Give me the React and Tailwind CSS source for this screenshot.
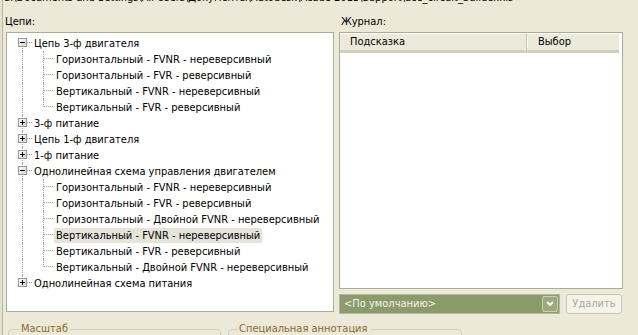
import React from 'react';

const tree = [
  {
    label: 'Цепь 3-ф двигателя',
    open: true,
    children: [
      'Горизонтальный - FVNR - нереверсивный',
      'Горизонтальный - FVR - реверсивный',
      'Вертикальный - FVNR - нереверсивный',
      'Вертикальный - FVR - реверсивный',
    ],
  },
  { label: '3-ф питание' },
  { label: 'Цепь 1-ф двигателя' },
  { label: '1-ф питание' },
  {
    label: 'Однолинейная схема управления двигателем',
    open: true,
    children: [
      'Горизонтальный - FVNR - нереверсивный',
      'Горизонтальный - FVR - реверсивный',
      'Горизонтальный - Двойной FVNR - нереверсивный',
      'Вертикальный - FVNR - нереверсивный',
      'Вертикальный - FVR - реверсивный',
      'Вертикальный - Двойной FVNR - нереверсивный',
    ],
  },
  { label: 'Однолинейная схема питания' },
];

function flatten() {
  const rows = [];
  tree.forEach((node, i) => {
    const firstRoot = i === 0;
    const lastRoot = i === tree.length - 1;
    rows.push({ level: 0, label: node.label, open: !!node.open, firstRoot, lastRoot });
    (node.children || []).forEach((c, j) => {
      rows.push({ level: 1, label: c, lastChild: j === node.children.length - 1, parentLast: lastRoot });
    });
  });
  return rows;
}

function Expander({ open }) {
  return (
    <span className="absolute left-[11px] top-[3px] w-[9px] h-[9px] border border-[#919b9c] bg-gradient-to-br from-white to-[#d8d5c6] flex items-center justify-center">
      <span className="relative w-[5px] h-[5px]">
        <span className="absolute left-0 top-[2px] w-[5px] h-[1px] bg-black" />
        {!open && <span className="absolute left-[2px] top-0 w-[1px] h-[5px] bg-black" />}
      </span>
    </span>
  );
}

function TreeRow({ row, selected }) {
  const dot = 'absolute border-dotted border-[#a0a0a0]';
  return (
    <div className={`relative h-[16px] flex items-center ${row.level === 0 ? 'pl-[25px]' : 'pl-[47px]'}`}>
      {row.level === 0 ? (
        <>
          {!row.firstRoot && <span className={`${dot} left-[15px] top-0 h-[8px] border-l`} />}
          {!row.lastRoot && <span className={`${dot} left-[15px] top-[8px] h-[8px] border-l`} />}
          <span className={`${dot} left-[16px] top-[7px] w-[9px] border-t`} />
          <Expander open={row.open} />
        </>
      ) : (
        <>
          {!row.parentLast && <span className={`${dot} left-[15px] top-0 h-[16px] border-l`} />}
          <span className={`${dot} left-[36px] top-0 ${row.lastChild ? 'h-[8px]' : 'h-[16px]'} border-l`} />
          <span className={`${dot} left-[37px] top-[7px] w-[9px] border-t`} />
        </>
      )}
      <span className={`px-[2px] leading-[15px] whitespace-nowrap ${selected ? 'bg-[#e6e4da]' : ''}`}>{row.label}</span>
    </div>
  );
}

export default function App() {
  const rows = flatten();
  return (
    <div className="w-[638px] h-[335px] overflow-hidden bg-[#ece9d8] relative font-['DejaVu_Sans_Condensed','DejaVu_Sans',sans-serif] text-[11px] text-black flex">
      {/* window frame edge */}
      <div className="w-[3px] shrink-0 flex">
        <div className="w-[2px] bg-[#e3e1d0]" />
        <div className="w-[1px] bg-[#b3bb98]" />
      </div>

      <div className="flex-1 flex flex-col">
        <div className="h-[6px] shrink-0 overflow-hidden">
          <div className="-mt-[9px] leading-[14px] whitespace-nowrap">
            C:\Documents and Settings\All Users\Документы\Autodesk\Acade 2013\Support\ace_circuit_builder.xls
          </div>
        </div>

        <div className="h-[26px] shrink-0 flex items-end pb-[3px] leading-[14px]">
          <span className="ml-[2px] w-[336px]">Цепи:</span>
          <span>Журнал:</span>
        </div>

        <div className="flex shrink-0">
          {/* tree */}
          <div className="ml-[3px] w-[328px] h-[280px] border border-[#a9ad95] bg-white pt-[2px] overflow-hidden">
            {rows.map((r, i) => (
              <TreeRow key={i} row={r} selected={i === 12} />
            ))}
          </div>

          {/* journal */}
          <div className="ml-[5px] w-[284px] flex flex-col">
            <div className="h-[257px] border border-[#a9ad95] bg-white pt-[1px] pr-[3px]">
              <div className="h-[19px] bg-[#ebeadb] flex border-b-[3px] border-[#d2cebd]">
                <div className="w-[187px] pl-[10px] flex items-center border-r border-[#c7c3b2]">
                  Подсказка
                </div>
                <div className="w-[1px] bg-white my-[2px]" />
                <div className="flex-1 pl-[10px] flex items-center">Выбор</div>
              </div>
            </div>

            <div className="mt-[5px] h-[20px] flex">
              <div className="w-[221px] h-[20px] border border-[#b3b89f] bg-[#8b9b6c] flex items-center p-[1px]">
                <span className="flex-1 pl-[3px] text-[#f4f4ea] leading-[14px]">&lt;По умолчанию&gt;</span>
                <span className="w-[16px] h-[16px] bg-[#9aa97e] border border-[#c6cfb0] rounded-[2px] flex items-center justify-center">
                  <svg width="8" height="6" viewBox="0 0 8 6">
                    <path d="M1 1l3 3 3-3" fill="none" stroke="#ffffff" strokeWidth="1.8" />
                  </svg>
                </span>
              </div>
              <div className="ml-[6px] w-[56px] h-[20px] border border-[#cac8bb] rounded-[3px] bg-[#f5f4ea] text-[#aca899] flex items-center justify-center">
                Удалить
              </div>
            </div>
          </div>
        </div>

        {/* group boxes */}
        <div className="flex shrink-0 mt-[8px]">
          <fieldset className="ml-[5px] w-[213px] h-[40px] border border-[#d0d0bf] rounded-[4px] px-[6px]">
            <legend className="px-[2px] ml-[4px] text-[#8a6a2e] leading-[14px]">Масштаб</legend>
          </fieldset>
          <fieldset className="ml-[7px] w-[234px] h-[40px] border border-[#d0d0bf] rounded-[4px] px-[6px]">
            <legend className="px-[2px] ml-[2px] text-[#8a6a2e] leading-[14px]">Специальная аннотация</legend>
          </fieldset>
        </div>
      </div>
    </div>
  );
}
